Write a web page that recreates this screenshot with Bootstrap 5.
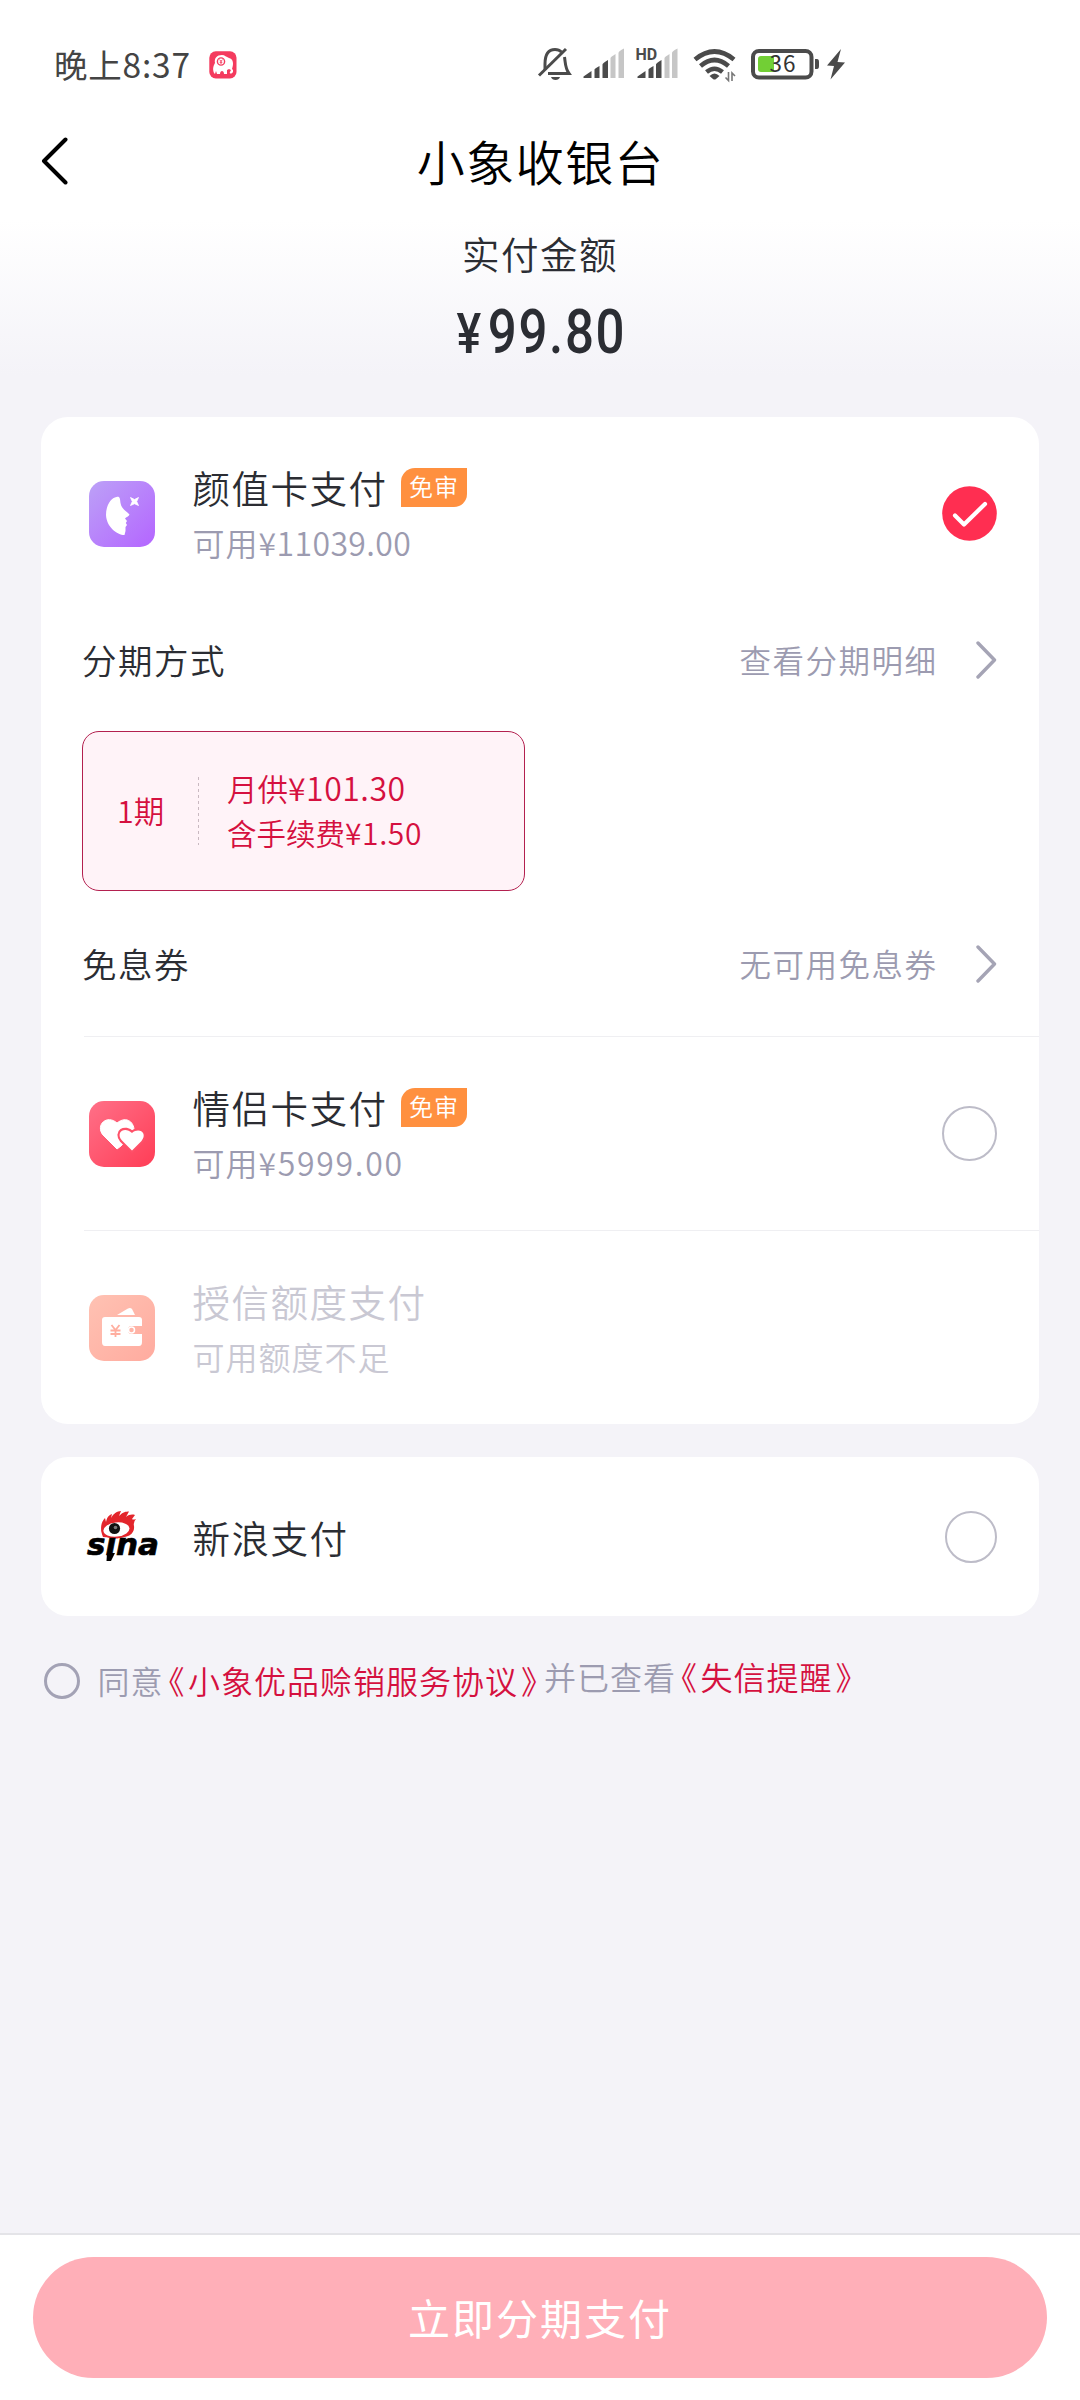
<!DOCTYPE html>
<html lang="zh-CN">
<head>
<meta charset="utf-8">
<meta name="viewport" content="width=device-width, initial-scale=1">
<title>小象收银台</title>
<link rel="stylesheet" href="https://cdn.jsdelivr.net/npm/bootstrap@5.3.0/dist/css/bootstrap.min.css">
<style>
  body { background: #f4f3f8; color: #2b2d33; font-family: "Noto Sans CJK SC", sans-serif; font-weight: 350; }
  .screen { width: 1080px; height: 2400px; overflow: hidden; }
  .screen svg { display: block; flex: none; }
  .top-area { height: 417px; background: linear-gradient(#fff 0, #fff 220px, #f4f3f8 375px); }
  .status-bar { height: 130px; padding: 0 232px 1px 54px; color: #444; }
  .clock { font-size: 33.5px; font-weight: 400; line-height: 40px; letter-spacing: .8px; width: 155px; padding-bottom: 2px; }
  .app-title { height: 64px; color: #000; font-size: 48px; line-height: 60px; letter-spacing: 1.5px; padding-left: 1px; }
  .back-btn { left: 41px; top: 7px; }
  .pay-label { margin-top: 34px; font-size: 37.5px; line-height: 50px; letter-spacing: 1.5px; }
  .pay-amount { font-family: Roboto, sans-serif; font-weight: 500; font-size: 61.5px; line-height: 60px; height: 60px; margin-top: 24px; padding-left: 2px; }
  .pay-amount span { display: inline-block; transform: scaleX(.83); letter-spacing: 2px; }
  .pay-amount small { font-size: 56px; font-weight: 500; margin-right: 6px; }
  .panel { margin: 0 41px; border-radius: 27px; background: #fff; }
  .method { height: 193px; padding: 0 42px 0 48px; }
  .method-text { margin: -3px 0 0 37.5px; }
  .method-name { font-size: 37.5px; line-height: 50px; letter-spacing: 1.5px; color: #2b2d33; }
  .method-sub { font-size: 32px; line-height: 40px; letter-spacing: 1px; color: #9c9bb0; margin-top: 10px; }
  .tag { width: 66px; height: 39px; margin-left: 13.5px; border-radius: 14px 0 13px 0; background: #ff903f; color: #fff; font-size: 24px; line-height: 36px; letter-spacing: 1px; }
  .faded .method-name, .faded .method-sub { color: #c9c8d3; }
  .line-row { padding: 0 42px 0 41px; font-size: 34.5px; line-height: 50px; letter-spacing: 1.5px; }
  .line-row .more { font-size: 31.5px; letter-spacing: 1.5px; color: #9c9bb0; }
  .line-row .more svg { margin: 2px 0 0 38.5px; }
  .plan { width: 443px; height: 160px; margin: 23px 0 -1px 41px; border: 1px solid #b3204f; border-radius: 17px; background: #fff3f8; color: #d5103f; }
  .plan-term { width: 115px; padding-left: 34px; font-size: 30.5px; }
  .plan-cut { width: 1px; height: 68px; background: repeating-linear-gradient(#c9b9c1 0 3px, transparent 3px 6px); }
  .plan-text { margin: -3px 0 0 28px; font-size: 30.5px; line-height: 44px; }
  .plan-text .num { font-size: 32px; letter-spacing: .5px; }
  .plan-fee { font-size: 29.5px; }
  .plan-fee .num { font-size: 30px; letter-spacing: .6px; }
  .split { height: 1px; margin-left: 43px; background: #efeff2; }
  .radio-dot { border: 2px solid #bdbcc8; border-radius: 50%; flex: none; }
  .sina-panel { height: 159px; margin-top: 33px; padding: 0 42px 0 45px; }
  .sina-panel svg { overflow: visible; }
  .sina-name { margin-left: 30.5px; }
  .agree { margin: 38px 0 0 44px; font-size: 32px; line-height: 48px; color: #9c9bb0; letter-spacing: 1px; font-feature-settings: "halt" 1; }
  .agree b { color: #d5103f; font-weight: 350; margin-left: 5px; }
  .agree b i { font-style: normal; margin-right: 2.5px; }
  .agree b i + i { margin: 0 0 0 3px; }
  .agree-dot { width: 36px; height: 36px; border: 3px solid #a3a2b5; }
  .agree-a { margin: -2px 0 0 17.5px; }
  .agree-b { margin: -2px 0 0 6px; padding-bottom: 7px; }
  .footer-bar { height: 167px; border-top: 2px solid #e4e4e8; background: #fff; padding: 22px 33px 0; }
  .pay-btn, .pay-btn:hover { width: 1014px; height: 121px; border: 0; border-radius: 61px; background: #ffafb8; color: #fff; font-size: 42px; letter-spacing: 2px; font-weight: 400; }
  .pay-btn span { display: block; padding-bottom: 3px; }
</style>
<script src="https://cdn.jsdelivr.net/npm/bootstrap@5.3.0/dist/js/bootstrap.bundle.min.js"></script>
</head>
<body>
<div class="screen d-flex flex-column">
  <header class="top-area">
    <div class="status-bar d-flex align-items-center">
      <span class="clock text-nowrap">晚上8:37</span>
      <svg width="28" height="28" viewBox="0 0 28 28"><rect x=".3" y=".3" width="27.2" height="27.2" rx="6.5" fill="#f43b5e"/><path d="M5 22C3 17 5 14 6 12C5 7 8 4 13 4C16 4 17 6 20 7C24 8 25 12 23 18L24 19V21C22 24 20 22 21 21L22 19L20 18L18 19V23H15C15 19 11 19 11 23H8L7 20L6 23Z" fill="#fff"/><circle cx="12" cy="10.5" r="3.6" fill="#fff" stroke="#f43b5e" stroke-width="1.4"/><path d="M10.6 8.6L12 10.4L13.4 8.6M12 10.2V13M10.7 11.3H13.3" stroke="#f43b5e" stroke-width=".9" fill="none"/></svg>
      <svg class="ms-auto" width="312" height="38" viewBox="535 46 312 38">
        <g fill="none" stroke="#4b4b4b" stroke-width="3">
          <path d="M544 70V64C544 54 548 49.5 554 49.5C557 49.5 559 50.5 560.500 52M563.500 57C564.500 63 564 68 568 73.500H547"/>
          <path d="M538 75.500L565 49"/>
        </g>
        <path d="M550 77H559C558 81 551 81 550 77Z" fill="#4b4b4b"/>
        <g fill="#4b4b4b">
          <path d="M582.500 78V76.500L590.500 71V78ZM593.500 78V69.500Q593.500 68.500 598.500 66V78ZM601.500 78V64.500Q601.500 63 607 60V78Z"/>
          <path d="M609.500 78V58Q609.500 57 614.500 54V78ZM617.500 78V53Q617.500 51 623 48.500V78Z" fill="#c6c6c6"/>
          <path d="M636.500 78V76.500L644.500 71V78ZM647.500 78V69.500Q647.500 68.500 652.500 66V78ZM655 78V64.500Q655 63 660.500 60V78Z"/>
          <path d="M663.500 78V58Q663.500 57 668.500 54V78ZM671 78V53Q671 51 676.500 48.500V78Z" fill="#c6c6c6"/>
        </g>
        <text x="634.500" y="59.500" font-family="Roboto, sans-serif" font-weight="700" font-size="16" fill="#4b4b4b">HD</text>
        <g fill="none" stroke="#4b4b4b" stroke-width="4.600"><path d="M694 59.500Q713.500 43.500 733 59.500"/><path d="M699.500 66Q713.500 54 727.500 66"/><path d="M705.500 72Q713.500 65.500 721.500 72"/></g>
        <path d="M708.500 76Q713.500 71 718.500 76L715 79Q713.500 80 712 79Z" fill="#4b4b4b"/>
        <path d="M727.500 72V80.500L724.500 77.500M731 81V73L734 76" stroke="#777" stroke-width="1.600" fill="none"/>
        <rect x="752" y="51" width="58.500" height="26.500" rx="6" fill="#fff" stroke="#4b4b4b" stroke-width="4"/>
        <path d="M760 56H773V72H760Q757 72 757 69V59Q757 56 760 56Z" fill="#72cf35"/>
        <path d="M814 59H816Q818 59 818 62V66Q818 69 816 69H814Z" fill="#4b4b4b"/>
        <text x="781.500" y="72.300" text-anchor="middle" font-family="Noto Sans CJK SC, sans-serif" font-weight="400" font-size="22.500" textLength="26" fill="#333">36</text>
        <path d="M840 49L826 65.500L833 66L829.500 79.500L844 62.500L836.500 62Z" fill="#4b4b4b"/>
      </svg>
    </div>
    <nav class="app-title position-relative text-center">
      <svg class="back-btn position-absolute" width="28" height="48" viewBox="0 0 28 48"><path d="M24.500 2.500L3 24L24.500 45.500" fill="none" stroke="#000" stroke-width="4" stroke-linecap="round" stroke-linejoin="round"/></svg>
      小象收银台
    </nav>
    <div class="pay-label text-center">实付金额</div>
    <div class="pay-amount d-flex justify-content-center"><span><small>¥</small>99.80</span></div>
  </header>

  <main class="flex-grow-1">
    <section class="panel">
      <div class="method d-flex align-items-center">
        <svg width="66" height="66" viewBox="0 0 66 66"><defs><linearGradient id="gp" x1="0" y1="0" x2="1" y2="1"><stop offset="0" stop-color="#bca1f7"/><stop offset="1" stop-color="#b465ff"/></linearGradient></defs><rect width="66" height="66" rx="15" fill="url(#gp)"/><path d="M27.500 16C31 15 31 18 31.500 22C32.500 28 37 30 40.500 33.500C40 35.500 37 36 36 37.500L38 40L36.800 42L38 44L36.500 46V50L35.500 54C28 54 17.500 46 17 34C17 24 22 17 27.500 16Z" fill="#fff"/><path d="M41.500 16.500L45.500 18.500L49.500 16.500L47.700 20.500L49.500 24.500L45.500 22.700L41.500 24.500L43.300 20.500Z" fill="#fff" stroke="#fff" stroke-width=".8"/></svg>
        <div class="method-text">
          <div class="d-flex align-items-center"><span class="method-name">颜值卡支付</span><span class="tag text-center text-nowrap">免审</span></div>
          <div class="method-sub">可用<span style="letter-spacing:.4px">¥11039.00</span></div>
        </div>
        <svg class="ms-auto" width="55" height="55" viewBox="0 0 55 55"><circle cx="27.500" cy="27.500" r="27.300" fill="#ff2e51"/><path d="M13 29.500L22 38.500L43 18" fill="none" stroke="#fff" stroke-width="4.200" stroke-linecap="round" stroke-linejoin="round"/></svg>
      </div>

      <div class="line-row d-flex align-items-center pt-4">
        <span>分期方式</span>
        <span class="more ms-auto d-flex align-items-center">查看分期明细<svg width="21" height="38" viewBox="0 0 21 38"><path d="M2 2L18.500 19L2 36" fill="none" stroke="#a5a4b5" stroke-width="3.400" stroke-linecap="round" stroke-linejoin="round"/></svg></span>
      </div>
      <div class="plan-wrap pt-4">
        <div class="plan d-flex align-items-center">
          <div class="plan-term text-nowrap">1期</div>
          <div class="plan-cut"></div>
          <div class="plan-text text-nowrap">
            <div>月供<span class="num">¥101.30</span></div>
            <div class="plan-fee">含手续费<span class="num">¥1.50</span></div>
          </div>
        </div>
      </div>
      <div class="line-row d-flex align-items-center pt-5 pb-5">
        <span>免息券</span>
        <span class="more ms-auto d-flex align-items-center">无可用免息券<svg width="21" height="38" viewBox="0 0 21 38"><path d="M2 2L18.500 19L2 36" fill="none" stroke="#a5a4b5" stroke-width="3.400" stroke-linecap="round" stroke-linejoin="round"/></svg></span>
      </div>

      <div class="split"></div>
      <div class="method d-flex align-items-center">
        <svg width="66" height="66" viewBox="0 0 66 66"><defs><linearGradient id="gr" x1="0" y1="0" x2="1" y2="1"><stop offset="0" stop-color="#ff7088"/><stop offset="1" stop-color="#ff3d56"/></linearGradient></defs><rect width="66" height="66" rx="15" fill="url(#gr)"/><path d="M28 48L14 34C6 24 18 13 28 22C38 14 46 22 45 31L32 45Z" fill="#fff" stroke="#fff" stroke-linejoin="round"/><path d="M43 49.500L33 39.500C26 31 36 25 43 32C50 26 59 32 52.500 40Z" fill="#fff" stroke="#ff5068" stroke-width="4.500" paint-order="stroke" stroke-linejoin="round"/></svg>
        <div class="method-text">
          <div class="d-flex align-items-center"><span class="method-name">情侣卡支付</span><span class="tag text-center text-nowrap">免审</span></div>
          <div class="method-sub">可用<span style="letter-spacing:1.7px">¥5999.00</span></div>
        </div>
        <span class="radio-dot ms-auto" style="width:55px;height:55px"></span>
      </div>
      <div class="split"></div>
      <div class="method faded d-flex align-items-center">
        <svg width="66" height="66" viewBox="0 0 66 66"><defs><linearGradient id="go" x1="0" y1="0" x2="1" y2="1"><stop offset="0" stop-color="#ffc2b3"/><stop offset="1" stop-color="#ffab9f"/></linearGradient></defs><rect width="66" height="66" rx="15" fill="url(#go)"/><path d="M28 20L39 13.500Q41.500 12.500 43 14L46 20Z" fill="#fff"/><path d="M16 22H50Q53 22 53 25V31H42Q39 31 39 35Q39 39 42 39H53V47Q53 51 50 51H16Q13 51 13 47V25Q13 22 16 22Z" fill="#fff"/><circle cx="42.500" cy="35" r="3" fill="#ffb5a8" stroke="#fff" stroke-width="1.500"/><path d="M22.500 30L26.500 35L30.500 30M26.500 35V42M21.500 35.500H31.500M21.500 39H31.500" fill="none" stroke="#ffae9f" stroke-width="1.800"/></svg>
        <div class="method-text">
          <div class="method-name">授信额度支付</div>
          <div class="method-sub">可用额度不足</div>
        </div>
      </div>
    </section>

    <section class="panel sina-panel d-flex align-items-center">
      <svg width="76" height="54" viewBox="0 0 76 54">
        <path d="M17 27C13 17 16 11 19 8L20 12C21 7 23 5 26 4L25 8C28 3 31 1.500 35 1L33 6C37 2 40 1.500 43 1.500L40 7C43 4.500 46 4 49 5L46 9Q47 10 50 9Q47 12 48 16C49 24 42 28 30 28Z" fill="#e3262c"/>
        <ellipse cx="30.500" cy="19.500" rx="14" ry="8" fill="#fff" stroke="#e3262c" stroke-width="1.800" transform="rotate(-6 31 20)"/>
        <text x="1" y="45" font-family="DejaVu Sans, sans-serif" font-weight="700" font-style="italic" font-size="31" textLength="72" fill="#000" stroke="#000" stroke-width=".7">sına</text>
        <circle cx="28.500" cy="18.500" r="5.600" fill="#111"/><circle cx="29.500" cy="17.500" r="1.800" fill="#777"/>
        <path d="M21 43H29L25 51H20.500Z" fill="#000"/>
      </svg>
      <span class="method-name sina-name">新浪支付</span>
      <span class="radio-dot ms-auto" style="width:52px;height:52px"></span>
    </section>

    <div class="agree d-flex align-items-center text-nowrap">
      <span class="radio-dot agree-dot"></span>
      <span class="agree-a">同意<b><i>《</i>小象优品赊销服务协议<i>》</i></b></span>
      <span class="agree-b">并已查看<b><i>《</i>失信提醒<i>》</i></b></span>
    </div>
  </main>

  <footer class="footer-bar">
    <button type="button" class="btn pay-btn p-0"><span>立即分期支付</span></button>
  </footer>
</div>
</body>
</html>
